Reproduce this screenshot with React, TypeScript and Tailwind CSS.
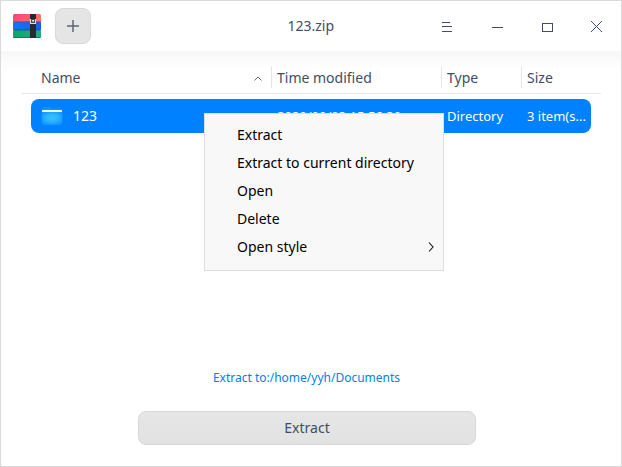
import React from "react";

const menuItems = [
  { label: "Extract" },
  { label: "Extract to current directory" },
  { label: "Open" },
  { label: "Delete" },
  { label: "Open style", submenu: true },
];

function ArchiveLogo() {
  return (
    <svg width="30" height="26" viewBox="0 0 30 26">
      <defs>
        <linearGradient id="red" x1="0" x2="1" y1="0" y2="0.4">
          <stop offset="0" stopColor="#f9407a" />
          <stop offset="1" stopColor="#fb7468" />
        </linearGradient>
        <linearGradient id="blue" x1="0" x2="1">
          <stop offset="0" stopColor="#0a78f5" />
          <stop offset="1" stopColor="#1c5cf0" />
        </linearGradient>
        <linearGradient id="green" x1="0" x2="1">
          <stop offset="0" stopColor="#0ea768" />
          <stop offset="1" stopColor="#2aa586" />
        </linearGradient>
      </defs>
      <rect x="1" y="1" width="28" height="9" rx="1.5" fill="url(#red)" />
      <rect x="1" y="17" width="28" height="8" rx="1.5" fill="url(#green)" />
      <rect x="1" y="9" width="28" height="8" rx="1" fill="url(#blue)" />
      <rect x="1" y="8.2" width="28" height="1" fill="#a2408a" />
      <rect x="1" y="16.4" width="28" height="1" fill="#0a5a98" />
      <rect x="1.5" y="24" width="27" height="1" fill="#0c8058" />
      <rect x="18" y="1" width="6" height="24" fill="#26292f" />
      <path d="M18 6H20V9H22.2V6H24V11H18Z" fill="#dedede" />
      <rect x="19" y="6" width="4" height="4" fill="#4a4a4c" />
      <rect x="20.2" y="7" width="1.8" height="1.6" fill="#f0f0f0" />
    </svg>
  );
}

function Folder() {
  return (
    <svg width="24" height="20" viewBox="0 0 24 20">
      <defs>
        <radialGradient id="folder" cx="0.5" cy="0.45" r="0.62">
          <stop offset="0" stopColor="#38c2ff" />
          <stop offset="0.5" stopColor="#2ab2ff" />
          <stop offset="1" stopColor="#0c92ff" />
        </radialGradient>
      </defs>
      <path d="M1 5V3Q1 1 3 1H9L11 2.5H19Q21 2.5 21 5V8H1Z" fill="#0697f8" />
      <rect x="1" y="4" width="20" height="3" rx="0.7" fill="#f1fbff" />
      <path d="M0.5 6H21.5V16Q21.5 19 18.5 19H4Q1 19 1 16Z" fill="url(#folder)" />
    </svg>
  );
}

function TitleBar() {
  return (
    <header className="flex h-[50px] shrink-0 items-center bg-white pl-[11px] pr-[18px]">
      <ArchiveLogo />
      <button className="ml-[13px] flex size-9 items-center justify-center rounded-lg border border-[#d9d9d9] bg-[#e5e5e5]">
        <svg width="12" height="12" viewBox="0 0 12 12" stroke="#5d6678" strokeWidth="1.5">
          <path d="M0 6H12M6 0V12" />
        </svg>
      </button>
      <h1 className="ml-[196.5px] flex-1 text-sm leading-5">123.zip</h1>
      <div className="mt-[3px] flex gap-[38px]">
        <svg width="12" height="12" viewBox="0 0 12 12" shapeRendering="crispEdges" fill="#414d68">
          <path d="M1 0H9V1H1ZM1 4H11V5H1ZM1 9H11V10H1Z" />
        </svg>
        <svg width="12" height="12" viewBox="0 0 12 12" shapeRendering="crispEdges" fill="#414d68">
          <path d="M1 5H12V6H1Z" />
        </svg>
        <svg width="12" height="12" viewBox="0 0 12 12" shapeRendering="crispEdges" fill="none" stroke="#414d68">
          <path d="M1.5 1.5H11.5V9.5H1.5Z" />
        </svg>
        <svg width="12" height="12" viewBox="0 0 12 12" overflow="visible" fill="none" stroke="#414d68">
          <path d="M0 -1L11 10M11 -1L0 10" />
        </svg>
      </div>
    </header>
  );
}

function ContextMenu() {
  return (
    <ul className="absolute -left-px -top-px ml-[204px] mt-[113px] h-[158px] w-[240px] border border-[#dedede] bg-[#f8f8f8] pt-[7px] text-sm text-black">
      {menuItems.map((item) => (
        <li key={item.label} className="flex h-7 items-center justify-between pl-8 pr-[9px]">
          <span>{item.label}</span>
          {item.submenu && (
            <svg width="6" height="10" viewBox="0 0 6 10" fill="none" stroke="#111" strokeWidth="1.1">
              <path d="M1 0.5L5 5L1 9.5" />
            </svg>
          )}
        </li>
      ))}
    </ul>
  );
}

export default function App() {
  return (
    <div className="relative flex h-[467px] w-[622px] flex-col border border-[#dadada] bg-white font-['Noto_Sans',sans-serif] text-sm text-[#414d68]">
      <TitleBar />
      <main className="flex flex-1 flex-col bg-linear-to-b from-[#f7f7f7] to-white to-[18px]">
        <div className="mx-5 mt-[15px] flex h-7 border-b border-[#e8e8e8]">
          <div className="flex h-[22px] w-[250px] items-center justify-between pl-5 pr-[9px] pt-0.5">
            <span>Name</span>
            <svg className="mt-px" width="8" height="5" viewBox="0 0 8 5" fill="none" stroke="#626b7c">
              <path d="M0.5 4.5L4 1L7.5 4.5" />
            </svg>
          </div>
          <div className="flex h-[22px] w-[170px] items-center border-l border-[#e6e6e6] pl-[5px] pt-0.5">Time modified</div>
          <div className="flex h-[22px] w-20 items-center border-l border-[#e6e6e6] pl-[5px] pt-0.5">Type</div>
          <div className="flex h-[22px] flex-1 items-center border-l border-[#e6e6e6] pl-[5px] pt-0.5">Size</div>
        </div>
        <div className="mx-[30px] mt-[5px] flex h-[34px] w-[560px] items-center rounded-lg bg-[#0081ff] text-[13px] text-white">
          <div className="flex w-[246px] items-center pl-[10px] text-sm">
            <Folder />
            <span className="ml-2">123</span>
          </div>
          <span className="w-[170px]">2020/09/03 15:56:30</span>
          <span className="w-20">Directory</span>
          <span>3 item(s...</span>
        </div>
        <footer className="mt-auto flex flex-col items-center pb-[21px] pr-2">
          <a className="mr-px text-xs leading-4 text-[#0082e6]">Extract to:/home/yyh/Documents</a>
          <button className="mt-[25px] h-[34px] w-[338px] rounded-lg border border-[#d7d7d7] bg-linear-to-b from-[#e6e6e6] to-[#e2e2e2] text-sm">
            Extract
          </button>
        </footer>
      </main>
      <ContextMenu />
    </div>
  );
}
